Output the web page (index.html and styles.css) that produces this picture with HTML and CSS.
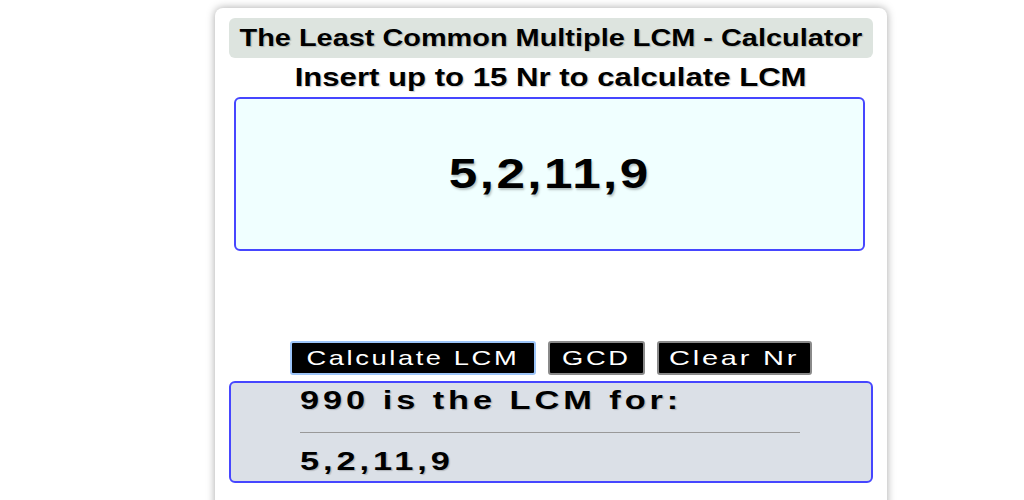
FILE: index.html
```html
<!DOCTYPE html>
<html lang="en">
<head>
    <meta charset="UTF-8">
    <title>LCM Calculator</title>
    <link rel="stylesheet" href="styles.css">
</head>
<body>
    <div class="card">
        <div class="title"><span class="stretch">The Least Common Multiple LCM - Calculator</span></div>
        <div class="subtitle"><span class="stretch">Insert up to 15 Nr to calculate LCM</span></div>
        <div class="entry"><span class="stretch">5,2,11,9</span></div>
        <div class="buttons">
            <button class="btn btn-active btn-calc"><span class="stretch">Calculate LCM</span></button>
            <button class="btn btn-gcd"><span class="stretch">GCD</span></button>
            <button class="btn btn-clear"><span class="stretch">Clear Nr</span></button>
        </div>
        <div class="result">
            <div class="result-head"><span class="stretch">990 is the LCM for:</span></div>
            <hr class="result-line">
            <div class="result-nums"><span class="stretch">5,2,11,9</span></div>
        </div>
    </div>
</body>
</html>
```

FILE: styles.css
```css
body {
    font-family: "Liberation Sans", Arial, sans-serif;
    margin: 0;
    padding: 8px 0 0 215px;
    background-color: #fff;
    color: #000;
    overflow: hidden;
}

.stretch {
    display: inline-block;
    white-space: nowrap;
}

.card {
    width: 644px;
    height: 520px;
    background: #fff;
    border-radius: 8px;
    box-shadow: 0 0 8px rgba(0, 0, 0, 0.35);
    padding: 10px 14px 0;
}

.title {
    background-color: #dde4df;
    border-radius: 6px;
    height: 40px;
    line-height: 40px;
    text-align: center;
    font-size: 23px;
    font-weight: bold;
    text-shadow: 1px 1px 1px rgba(0, 0, 0, 0.2);
}

.title .stretch {
    transform: scaleX(1.256);
}

.subtitle {
    text-align: center;
    font-size: 25px;
    font-weight: bold;
    margin-top: 4px;
    height: 30px;
    line-height: 30px;
    text-shadow: 1px 1px 1px rgba(0, 0, 0, 0.2);
}

.subtitle .stretch {
    transform: scaleX(1.245);
}

.entry {
    margin: 5px 8px 0 5px;
    height: 150px;
    background-color: #f0ffff;
    border: 2px solid #4646ff;
    border-radius: 6px;
    display: flex;
    align-items: center;
    justify-content: center;
    font-size: 42px;
    font-weight: bold;
    letter-spacing: 2px;
    text-shadow: 1px 2px 2px rgba(0, 0, 0, 0.25);
}

.entry .stretch {
    transform: scaleX(1.22);
}

.buttons {
    display: flex;
    justify-content: center;
    gap: 12px;
    margin-top: 90px;
}

.btn {
    background-color: #000;
    color: #fff;
    font-family: "Liberation Sans", Arial, sans-serif;
    font-size: 21px;
    letter-spacing: 2px;
    padding: 0;
    height: 34px;
    border: 2px solid #8a8a8a;
    border-radius: 3px;
}

.btn .stretch {
    transform: scaleX(1.3);
}

.btn-calc {
    width: 246px;
}

.btn-gcd {
    width: 97px;
}

.btn-clear {
    width: 155px;
}

.btn-clear .stretch {
    transform: scaleX(1.38);
}

.btn-active {
    border-color: #9cc4f8;
}

.result {
    margin-top: 6px;
    height: 98px;
    background-color: #dbe0e7;
    border: 2px solid #4646ff;
    border-radius: 6px;
    padding-left: 69px;
    font-size: 26px;
    font-weight: bold;
    letter-spacing: 3px;
    text-shadow: 1px 1px 1px rgba(0, 0, 0, 0.2);
}

.result .stretch {
    transform: scaleX(1.32);
    transform-origin: left center;
}

.result-head {
    height: 34px;
    line-height: 34px;
}

.result-line {
    width: 500px;
    margin: 15px 0 13px;
    border: 0;
    border-top: 1px solid #999;
    height: 0;
}

.result-nums {
    line-height: 30px;
}
```
